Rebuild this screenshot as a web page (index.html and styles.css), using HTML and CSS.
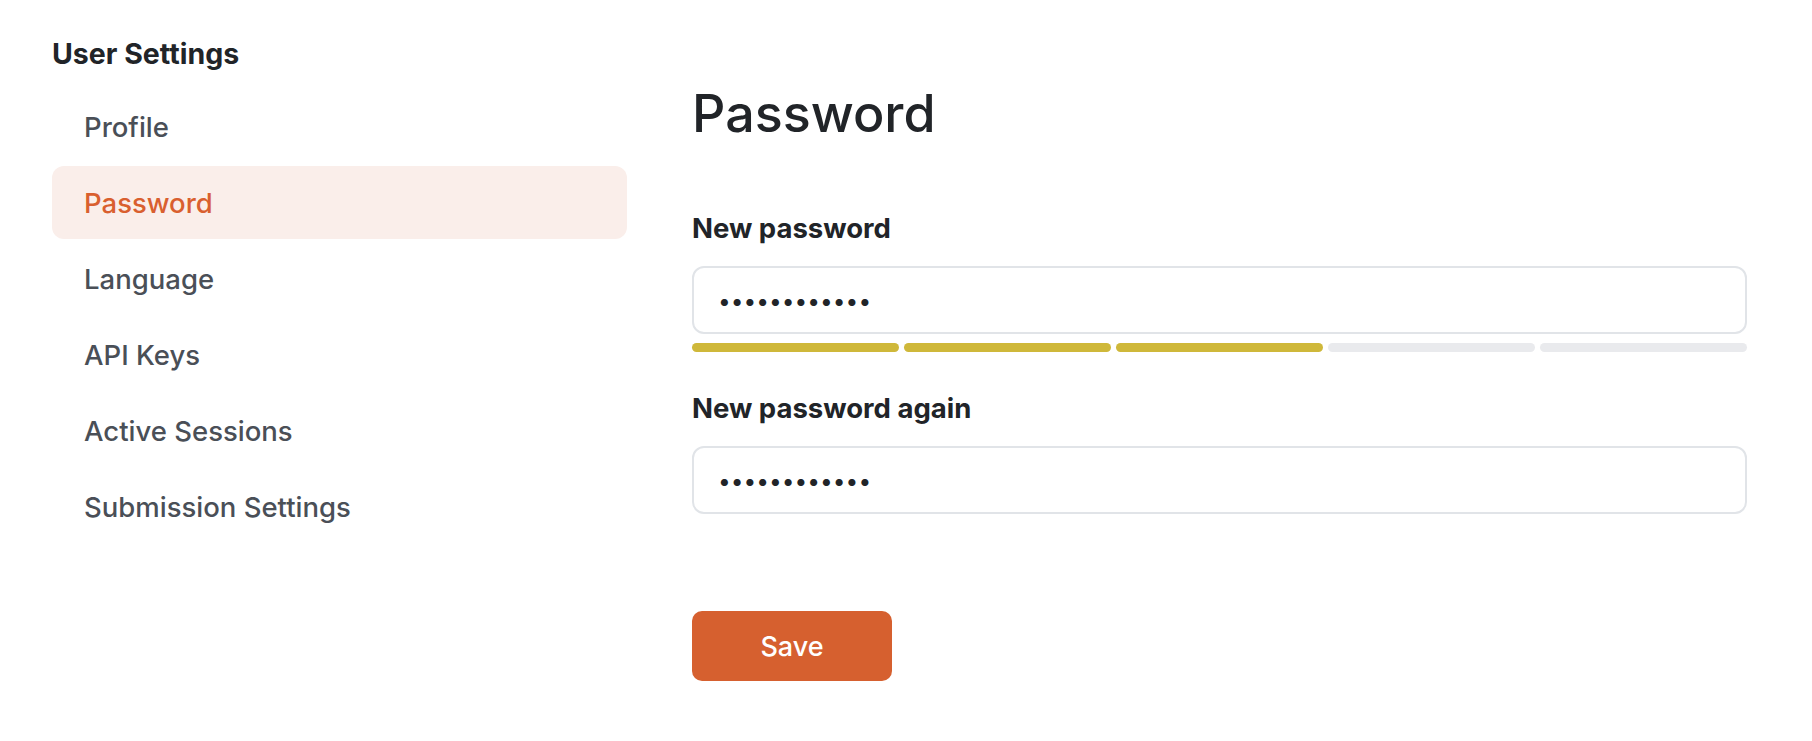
FILE: index.html
```html
<!DOCTYPE html>
<html lang="en">
<head>
<meta charset="utf-8">
<title>User Settings - Password</title>
<link rel="stylesheet" href="styles.css">
</head>
<body>
<div class="page">
  <aside class="sidebar">
    <h2 class="sidebar-title">User Settings</h2>
    <nav class="nav">
      <a class="nav-item" href="#">Profile</a>
      <a class="nav-item active" href="#">Password</a>
      <a class="nav-item" href="#">Language</a>
      <a class="nav-item" href="#">API Keys</a>
      <a class="nav-item" href="#">Active Sessions</a>
      <a class="nav-item" href="#">Submission Settings</a>
    </nav>
  </aside>
  <main class="main">
    <h1 class="heading">Password</h1>
    <form class="form">
      <label class="label" for="pw1">New password</label>
      <input class="input" id="pw1" type="password" value="abcdefghijkl">
      <div class="strength">
        <span class="seg on"></span>
        <span class="seg on"></span>
        <span class="seg on"></span>
        <span class="seg"></span>
        <span class="seg"></span>
      </div>
      <label class="label label-2" for="pw2">New password again</label>
      <input class="input" id="pw2" type="password" value="abcdefghijkl">
      <button class="save" type="button">Save</button>
    </form>
  </main>
</div>
</body>
</html>
```

FILE: styles.css
```css
* { box-sizing: border-box; }
html, body { margin: 0; padding: 0; background: #ffffff; }
body {
  font-family: Inter, "Noto Sans", "Liberation Sans", sans-serif;
  color: #212428;
}
.page {
  display: flex;
  align-items: flex-start;
  padding: 37px 65px 0 52px;
}
.sidebar {
  width: 575px;
  flex: 0 0 575px;
}
.sidebar-title {
  margin: 0 0 19px 0;
  font-size: 28.5px;
  line-height: 34px;
  font-weight: 700;
  color: #212428;
}
.nav {
  display: flex;
  flex-direction: column;
  gap: 3px;
}
.nav-item {
  display: flex;
  align-items: center;
  height: 73px;
  padding-left: 32px;
  border-radius: 12px;
  font-size: 27.5px;
  font-weight: 500;
  color: #4a4f57;
  text-decoration: none;
}
.nav-item.active {
  background: #faeeea;
  color: #d95f2f;
}
.main {
  flex: 1;
  margin-left: 65px;
}
.heading {
  margin: 46px 0 0 0;
  font-size: 52px;
  line-height: 62px;
  font-weight: 500;
  color: #212428;
}
.form {
  display: flex;
  flex-direction: column;
  margin-top: 66px;
}
.label {
  font-size: 27.5px;
  line-height: 34px;
  font-weight: 700;
  color: #212428;
  margin-bottom: 21px;
}
.label-2 { margin-top: 39px; }
.input {
  width: 100%;
  height: 68px;
  border: 2px solid #e1e4e8;
  border-radius: 12px;
  padding: 0 24px;
  font-family: Inter, "Noto Sans", sans-serif;
  font-size: 22.7px;
  letter-spacing: 0;
  color: #212428;
  background: #ffffff;
  outline: none;
}
.strength {
  display: flex;
  gap: 5px;
  margin-top: 9px;
  height: 9px;
}
.seg {
  flex: 1;
  border-radius: 5px;
  background: #e9eaed;
}
.seg.on { background: #cfb83a; }
.save {
  align-self: flex-start;
  margin-top: 97px;
  width: 200px;
  height: 70px;
  border: none;
  border-radius: 10px;
  background: #d6602f;
  color: #ffffff;
  font-family: Inter, "Noto Sans", sans-serif;
  font-size: 27px;
  font-weight: 500;
  cursor: pointer;
}
```
